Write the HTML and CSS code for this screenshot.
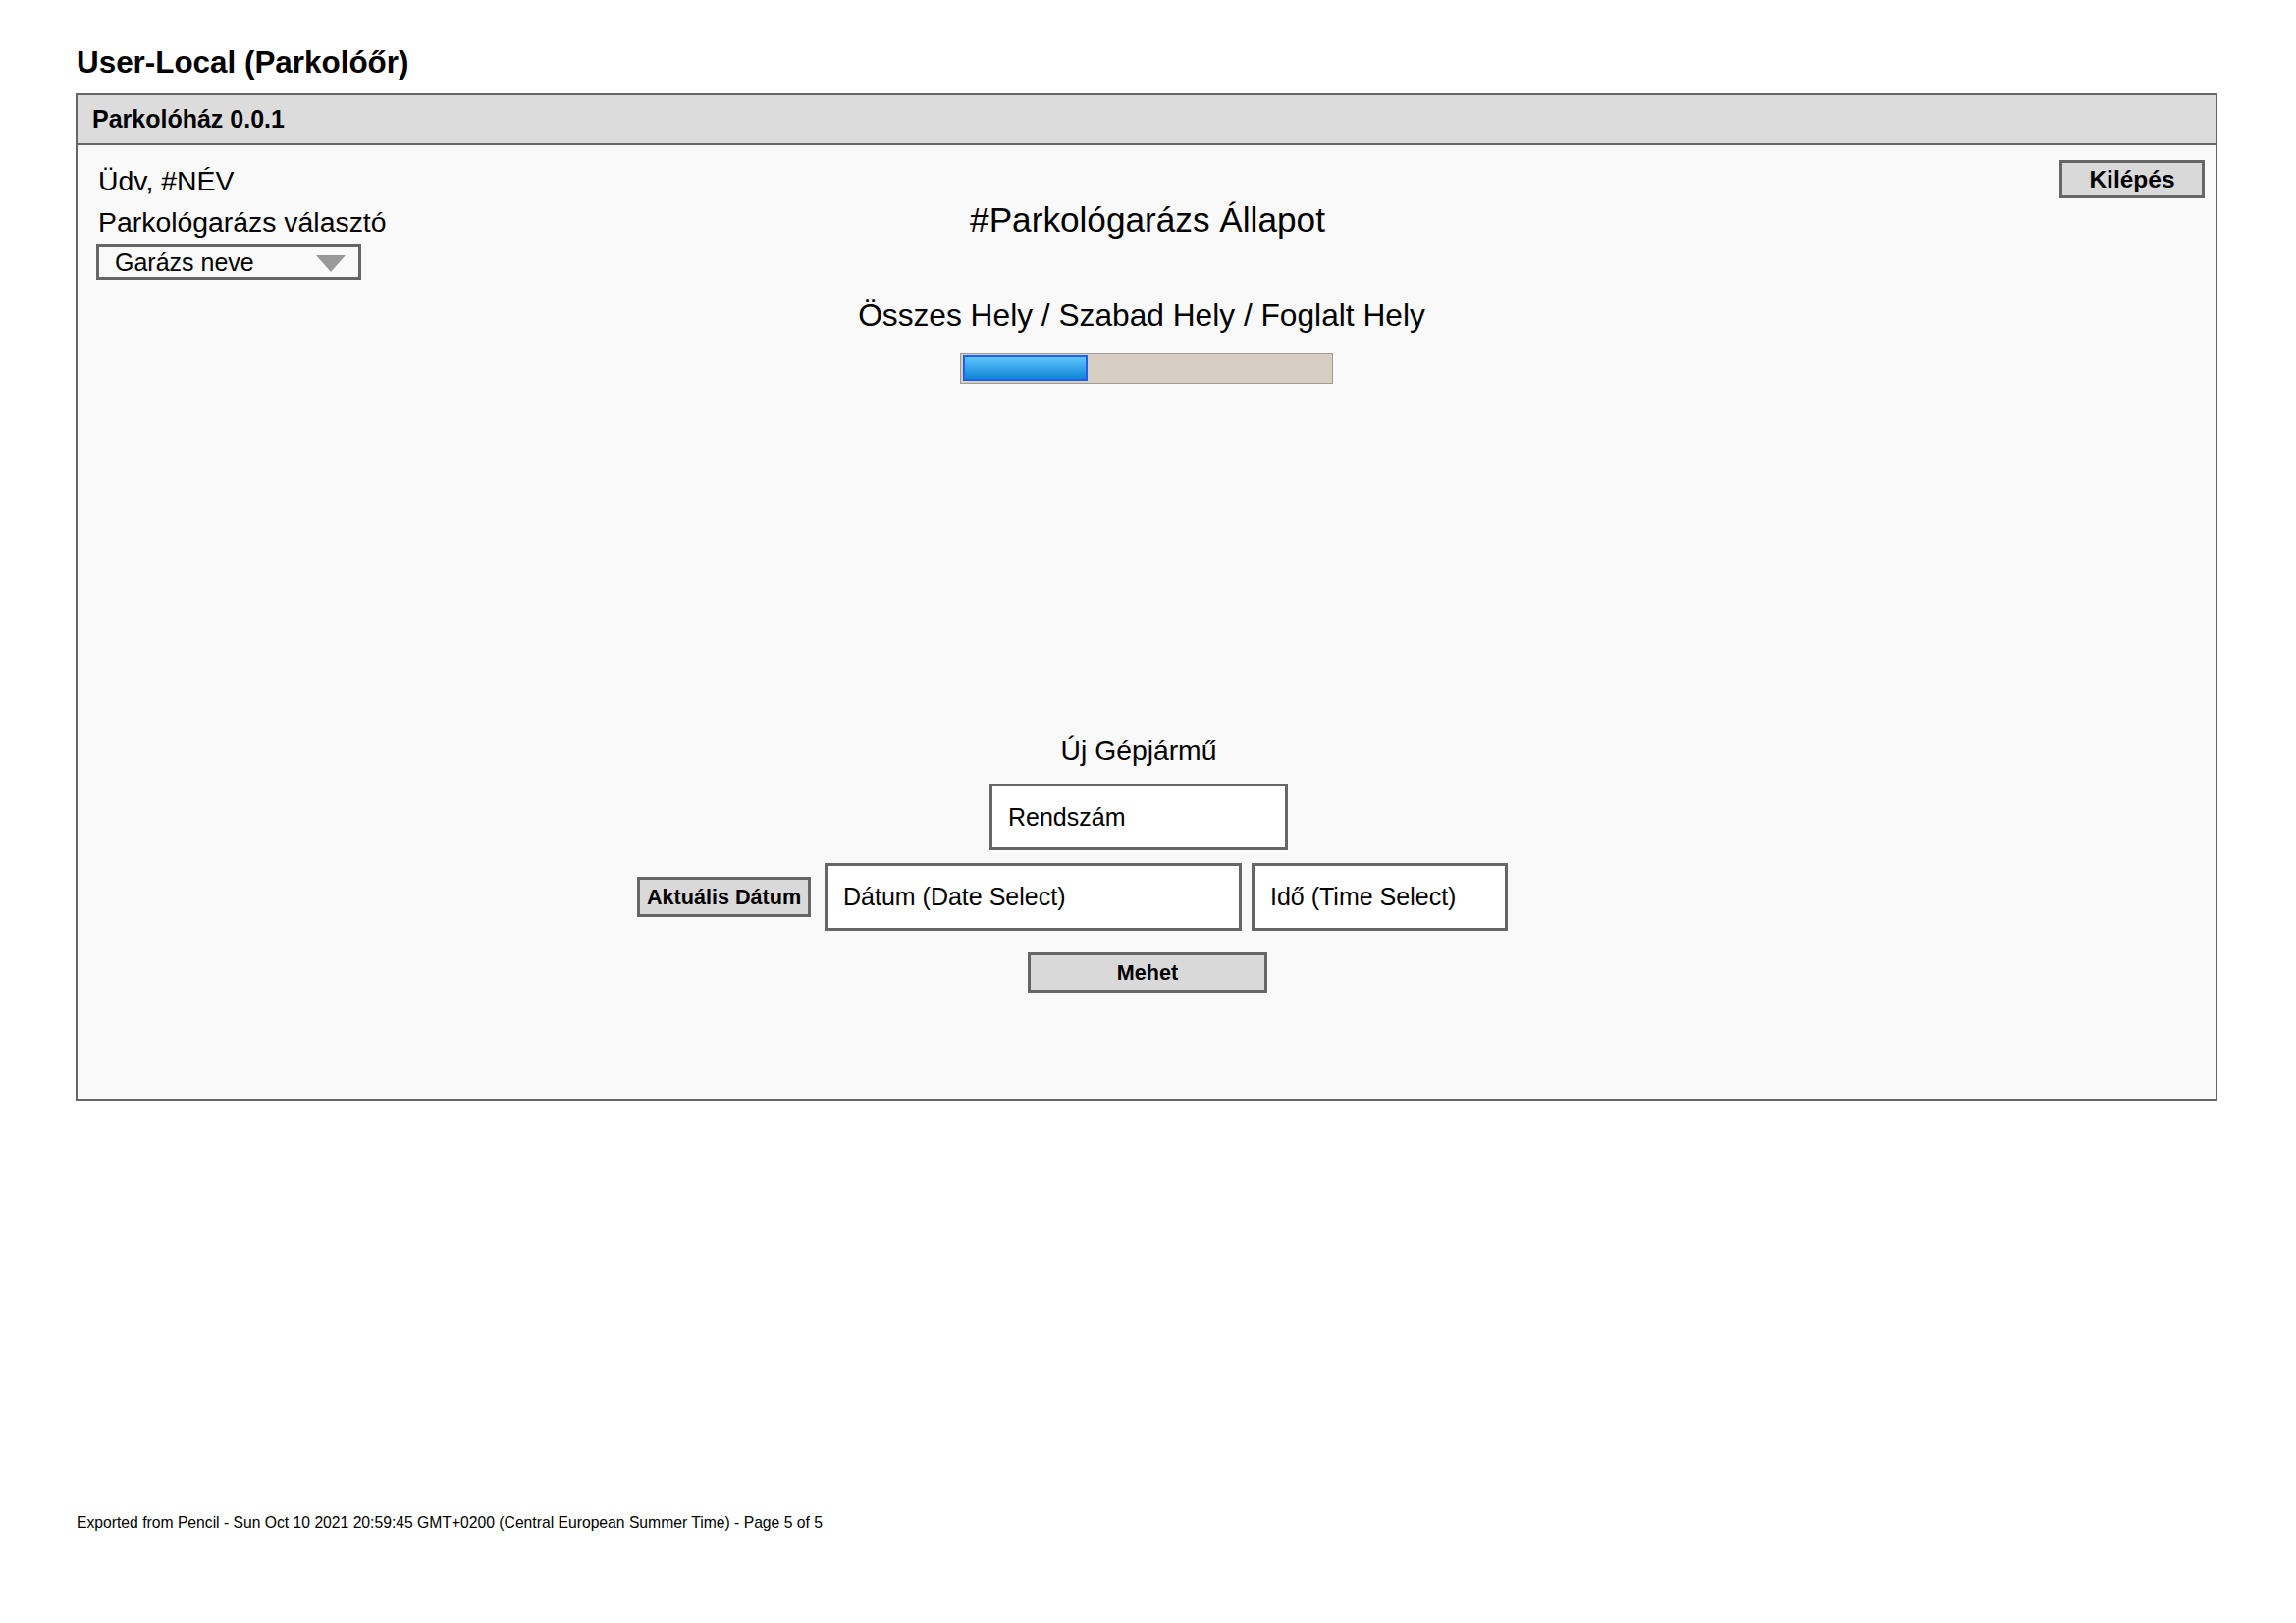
FILE: index.html
```html
<!DOCTYPE html>
<html lang="hu">
<head>
<meta charset="utf-8">
<title>User-Local (Parkolóőr)</title>
<link rel="stylesheet" href="styles.css">
</head>
<body>
<div class="page">
  <h1 class="page-title">User-Local (Parkolóőr)</h1>
  <div class="window">
    <div class="titlebar">Parkolóház 0.0.1</div>
    <div class="win-body">
      <div class="top-grid">
        <div class="left-col">
          <div class="line">Üdv, #NÉV</div>
          <div class="line">Parkológarázs választó</div>
          <div class="dropdown">
            <span class="dd-text">Garázs neve</span>
            <span class="dd-arrow"></span>
          </div>
        </div>
        <div class="center-col">
          <div class="heading">#Parkológarázs Állapot</div>
          <div class="subtitle">Összes Hely / Szabad Hely / Foglalt Hely</div>
          <div class="progress"><div class="progress-fill" style="width: 34%"></div></div>
        </div>
        <div class="right-col">
          <button class="btn btn-logout">Kilépés</button>
        </div>
      </div>
      <div class="new-vehicle">
        <div class="nv-title">Új Gépjármű</div>
        <div class="field field-plate">Rendszám</div>
        <div class="date-row">
          <button class="btn btn-today">Aktuális Dátum</button>
          <div class="field field-date">Dátum (Date Select)</div>
          <div class="field field-time">Idő (Time Select)</div>
        </div>
        <button class="btn btn-go">Mehet</button>
      </div>
    </div>
  </div>
  <div class="footer">Exported from Pencil - Sun Oct 10 2021 20:59:45 GMT+0200 (Central European Summer Time) - Page 5 of 5</div>
</div>
</body>
</html>
```

FILE: styles.css
```css
* { box-sizing: border-box; }

html, body {
  margin: 0;
  padding: 0;
  background: #ffffff;
  color: #000000;
  font-family: "Liberation Sans", Arial, sans-serif;
}

.page {
  padding-left: 77px;
  padding-top: 46px;
  width: 2339px;
  height: 1653px;
}

.page-title {
  margin: 0 0 13px 1px;
  font-size: 31.4px;
  line-height: 36px;
  font-weight: bold;
}

.window {
  width: 2182px;
  border: 2px solid #666666;
  background: #f9f9f9;
}

.titlebar {
  height: 51px;
  background: #dcdcdc;
  border-bottom: 2px solid #666666;
  padding-left: 15px;
  padding-top: 1px;
  font-size: 25px;
  line-height: 47px;
  font-weight: bold;
}

.win-body {
  height: 971px;
  display: flex;
  flex-direction: column;
}

.top-grid {
  display: grid;
  grid-template-columns: 1fr auto 1fr;
  align-items: start;
}

.left-col {
  padding-top: 15px;
  padding-left: 21px;
}

.line {
  font-size: 28.4px;
  line-height: 42px;
}

.dropdown {
  margin-top: 2px;
  margin-left: -2px;
  width: 270px;
  height: 36px;
  border: 3px solid #666666;
  background: #f9f9f9;
  display: flex;
  align-items: center;
  justify-content: space-between;
  padding-left: 16px;
  padding-right: 13px;
  font-size: 25px;
}

.dd-arrow {
  width: 0;
  height: 0;
  border-left: 15px solid transparent;
  border-right: 15px solid transparent;
  border-top: 17px solid #999999;
  margin-top: 2px;
}

.center-col {
  display: flex;
  flex-direction: column;
  align-items: center;
  padding-top: 56px;
}

.heading {
  font-size: 35.2px;
  line-height: 40px;
  margin-left: 2px;
}

.subtitle {
  margin-top: 57px;
  font-size: 31.7px;
  line-height: 40px;
  margin-right: 10px;
}

.progress {
  margin-top: 19px;
  width: 380px;
  height: 31px;
  background: #d6cec2;
  border: 1px solid #a39a8c;
  padding: 1px 2px 2px 2px;
}

.progress-fill {
  height: 100%;
  border: 2px solid #1f5ff0;
  background: linear-gradient(to bottom, #5ec6fb 0%, #3aa8ee 45%, #0f86d6 100%);
}

.right-col {
  display: flex;
  justify-content: flex-end;
  padding-top: 15px;
  padding-right: 11px;
}

.btn {
  font-family: "Liberation Sans", Arial, sans-serif;
  font-weight: bold;
  color: #000000;
  background: #d9d9d9;
  border: 3px solid #666666;
  border-radius: 0;
  padding: 0;
  margin: 0;
}

.btn-logout {
  width: 148px;
  height: 39px;
  font-size: 24.5px;
}

.new-vehicle {
  display: flex;
  flex-direction: column;
  align-items: center;
  margin-top: 353px;
}

.nv-title {
  font-size: 28.3px;
  line-height: 40px;
  margin-right: 16px;
}

.field {
  background: #ffffff;
  border: 3px solid #666666;
  display: flex;
  align-items: center;
  font-size: 25px;
  padding-left: 16px;
}

.field-plate {
  margin-top: 14px;
  margin-right: 16px;
  width: 304px;
  height: 68px;
}

.date-row {
  margin-top: 13px;
  margin-right: 151px;
  display: flex;
  align-items: center;
}

.btn-today {
  width: 177px;
  height: 41px;
  font-size: 21.6px;
  margin-right: 14px;
}

.field-date {
  width: 425px;
  height: 69px;
  margin-right: 10px;
}

.field-time {
  width: 261px;
  height: 69px;
}

.btn-go {
  margin-top: 22px;
  width: 244px;
  height: 41px;
  font-size: 21.6px;
  margin-left: 2px;
}

.footer {
  margin-top: 421px;
  margin-left: 1px;
  font-size: 15.7px;
  line-height: 18px;
}
```
